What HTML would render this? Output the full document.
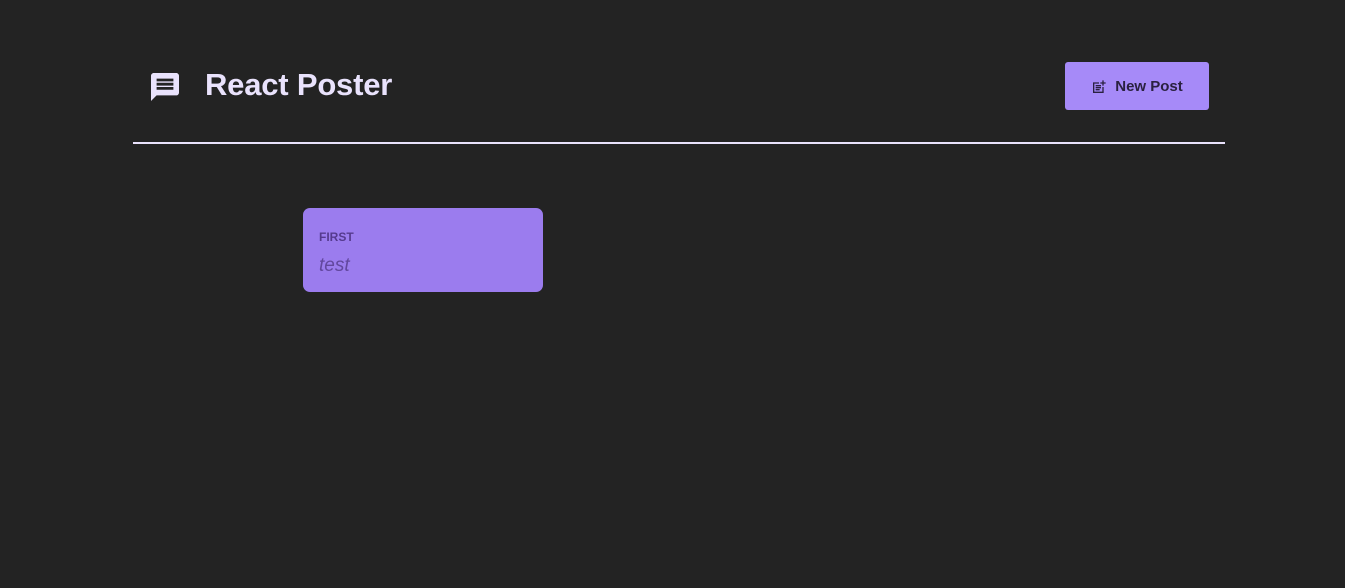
<!DOCTYPE html>
<html><head><style>
body{margin:0;background:#232323;width:1345px;height:588px;overflow:hidden;font-family:"Liberation Sans",sans-serif;position:relative}
.logo{position:absolute;left:151px;top:73px}
h1{position:absolute;left:205px;top:67px;margin:0;font-size:31px;font-weight:bold;color:#e9e2fc;letter-spacing:-0.2px}
.btn{position:absolute;left:1065px;top:62px;width:144px;height:48px;background:#a68af8;border-radius:3px;color:#2a2140;font-weight:bold;font-size:15px;display:flex;align-items:center;justify-content:center;gap:8px;padding-top:1px;box-sizing:border-box}
hr{position:absolute;left:133px;top:142px;width:1092px;margin:0;border:0;border-top:2px solid #e9e2fc}
.card{position:absolute;left:303px;top:208px;width:240px;height:84px;background:#9b7cee;border-radius:7px}
.a{position:absolute;left:16px;top:22px;font-size:12px;font-weight:bold;color:#553a8e}
.t{position:absolute;left:16px;top:47px;font-size:19px;font-style:italic;color:#62479e}
</style></head><body>
<svg class="logo" width="28" height="28" viewBox="2 2 20 20"><path fill="#e9e2fc" d="M20 2H4c-1.1 0-2 .9-2 2v18l4-4h14c1.1 0 2-.9 2-2V4c0-1.1-.9-2-2-2zM18 14H6v-2h12v2zm0-3H6V9h12v2zm0-3H6V6h12v2z"/></svg>
<h1>React Poster</h1>
<div class="btn"><svg width="16" height="16" viewBox="0 0 24 24"><path fill="#2a2140" d="M17 2v3h-3v2h3v3h2V7h3V5h-3V2zM3 5v16h16v-9h-2v7H5V7h7V5zm4 4v2h8V9zm0 3v2h8v-2zm0 3v2h6v-2z"/></svg>New Post</div>
<hr>
<div class="card"><div class="a">FIRST</div><div class="t">test</div></div>
</body></html>
